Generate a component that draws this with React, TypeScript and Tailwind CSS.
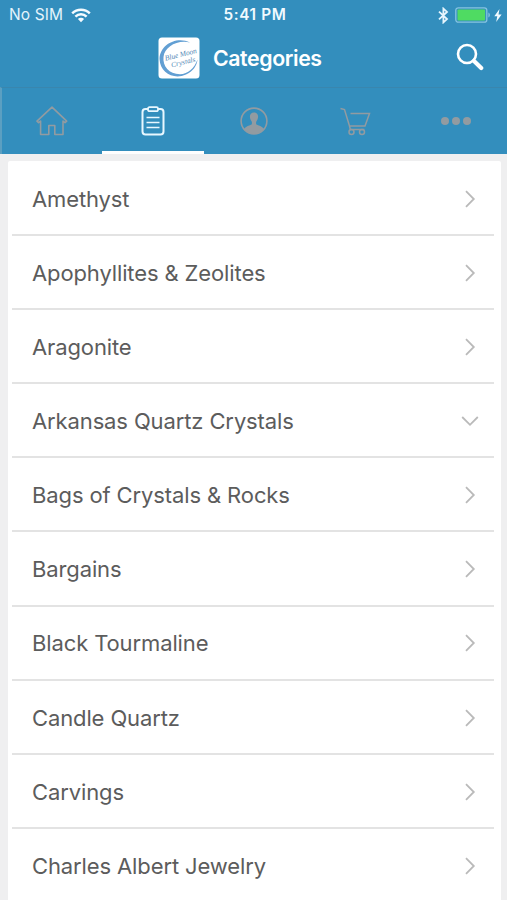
import type { ReactNode } from "react";

interface Category {
  name: string;
  open?: boolean;
}

const categories: Category[] = [
  { name: "Amethyst" },
  { name: "Apophyllites & Zeolites" },
  { name: "Aragonite" },
  { name: "Arkansas Quartz Crystals", open: true },
  { name: "Bags of Crystals & Rocks" },
  { name: "Bargains" },
  { name: "Black Tourmaline" },
  { name: "Candle Quartz" },
  { name: "Carvings" },
  { name: "Charles Albert Jewelry" },
];

export default function App() {
  return (
    <div className="flex h-[900px] w-[507px] flex-col overflow-hidden bg-[#efeff0] font-['Inter',sans-serif]">
      <header className="h-[154px] shrink-0 bg-[#338ebd] text-white">
        <StatusBar />
        <TitleBar />
        <TabBar />
      </header>

      {/* Category list */}
      <main className="mt-[7px] ml-2 w-[493px] flex-1 overflow-hidden rounded-t-[2px] bg-white pt-[0.8px] pr-[7px] pl-1">
        <ul>
          {categories.map((category) => (
            <li
              key={category.name}
              className="flex h-[74.13px] items-center justify-between border-b-2 border-[#e3e3e3] pt-[1.6px] pr-[15px] pl-5"
            >
              <span className="text-[22px] leading-7 tracking-[-0.12px] text-[#5c5c5c]">
                {category.name}
              </span>
              <Chevron open={category.open} />
            </li>
          ))}
        </ul>
      </main>
    </div>
  );
}

function StatusBar() {
  return (
    <div className="grid h-[30px] grid-cols-3 items-center pr-1.5 pl-[9px]">
      <div className="flex items-center gap-2">
        <span className="text-[15.5px] leading-5 tracking-[0.1px] text-[#e4f4fc]">No SIM</span>
        <svg width="20" height="15" viewBox="0 0 20 15" fill="none" stroke="#f4fbff" strokeWidth="2.5">
          <path d="M1.2 5.3a12.5 12.5 0 0 1 17.6 0" />
          <path d="M4.4 8.6a8 8 0 0 1 11.2 0" />
          <path d="M10 14.2 6.9 11.1a4.4 4.4 0 0 1 6.2 0z" fill="#f4fbff" stroke="none" />
        </svg>
      </div>
      <span className="text-center text-[15.3px] leading-5 font-semibold tracking-[0.65px] text-[#f0faff]">
        5:41 PM
      </span>
      <div className="-mr-px flex items-center justify-end">
        <svg width="11" height="17" viewBox="0 0 11 17" fill="none" stroke="#e6f5fd" strokeWidth="1.8">
          <path d="m1 4.7 8 7.4-3.6 3.3V1.6L9 4.9 1 12.3" />
        </svg>
        <svg className="mr-1 ml-1.5" width="35" height="16" viewBox="0 0 35 16">
          <rect x=".8" y=".8" width="31" height="14.4" rx="2.5" fill="none" stroke="#86c4df" strokeWidth="1.3" />
          <rect x="2.5" y="2.5" width="27.6" height="11" rx="1" fill="#4fdb62" />
          <path d="M33.4 5.6c2 .8 2 4 0 4.8z" fill="#86c4df" />
        </svg>
        <svg width="8" height="13" viewBox="0 0 8 13" fill="#f1faff">
          <path d="M5.5 0 .3 7.3h3L2.2 13l5.4-7.4H4.5z" />
        </svg>
      </div>
    </div>
  );
}

function TitleBar() {
  return (
    <div className="flex h-[57px] items-center pr-[23px] pb-[2px] pl-[158px]">
      <Logo />
      <h1 className="ml-[13px] text-[21.3px] leading-7 font-semibold tracking-[-0.4px]">Categories</h1>
      <button type="button" aria-label="Search" className="ml-auto pb-[2px]">
        <svg width="28" height="28" viewBox="0 0 28 28" fill="none" stroke="white">
          <circle cx="11" cy="11" r="9" strokeWidth="2.6" />
          <path d="m18 18 7.2 7" strokeWidth="4.2" strokeLinecap="round" />
        </svg>
      </button>
    </div>
  );
}

function Logo() {
  return (
    <svg className="overflow-visible" width="42" height="42" viewBox="0 0 42 42">
      <rect x=".5" y=".5" width="41" height="41" rx="3.5" fill="white" />
      <path
        d="M32 5.5C18-1 2 8 1.5 22 2 36 16 43 28 37.5c7-3 11-9 11.5-15C36.5 31 30 37.2 22 37.2 11 37.2 4.5 29 5.5 20 6.5 10 19 2.5 32 5.5z"
        fill="#629fd3"
      />
      <g
        fill="#5288b5"
        fontFamily="'Liberation Serif', serif"
        fontStyle="italic"
        fontSize="7.4"
        transform="rotate(-14 21 22)"
      >
        <text x="7.5" y="20.5">Blue Moon</text>
        <text x="12" y="28.5">Crystals</text>
      </g>
    </svg>
  );
}

function TabBar() {
  return (
    <nav className="grid h-[67px] grid-cols-5 border-t border-l-2 border-t-[#3986ae] border-l-[#5b9fc1] text-[#929ba1]">
      <Tab label="Home">
        <svg width="32" height="30" viewBox="0 0 32 30" fill="none" stroke="currentColor" strokeWidth="1.6" strokeLinejoin="round">
          <path d="M16 1.2 1 15.2l1.6 1.5 2-1.7v13.5h8.2v-9h6v9H27V15l2 1.7 1.7-1.5z" />
        </svg>
      </Tab>
      <Tab label="Categories" active>
        <svg width="24" height="30" viewBox="0 0 24 30" fill="none" stroke="currentColor" strokeWidth="2">
          <rect x="1.5" y="3" width="21" height="25.5" rx="3" />
          <rect x="7" y="1.2" width="10" height="4" rx="1.5" fill="#338ebd" strokeWidth="1.8" />
          <path d="M5.5 11.5h13M5.5 16.5h13M5.5 21.5h13" strokeWidth="1.5" />
        </svg>
      </Tab>
      <Tab label="Account">
        <svg width="28" height="28" viewBox="0 0 28 28">
          <circle cx="14" cy="14" r="12.9" fill="none" stroke="currentColor" strokeWidth="1.6" />
          <path
            d="M14 5.5c-2.8 0-4.3 1.9-4.1 4.6.2 2.3 1.1 3.6 2 4.8v2.4c-2.5 1.4-6 1.8-7.9 4.7a13 13 0 0 0 20 0c-1.9-2.9-5.4-3.3-7.9-4.7v-2.4c.9-1.2 1.8-2.5 2-4.8.2-2.7-1.3-4.6-4.1-4.6z"
            fill="currentColor"
          />
        </svg>
      </Tab>
      <Tab label="Cart">
        <svg width="31" height="29" viewBox="0 0 31 29" fill="none" stroke="currentColor" strokeWidth="1.5">
          <path d="M.5 1.5 4.5 2.5 9.5 19H25L29.5 6.5H10.5M9.5 19l.8 3.5h14" />
          <circle cx="11.5" cy="25" r="2.5" />
          <circle cx="22" cy="25" r="2.5" />
        </svg>
      </Tab>
      <Tab label="More">
        <svg width="30" height="8" viewBox="0 0 30 8" fill="currentColor">
          <circle cx="4" cy="4" r="4" />
          <circle cx="15" cy="4" r="4" />
          <circle cx="26" cy="4" r="4" />
        </svg>
      </Tab>
    </nav>
  );
}

function Tab({ label, active, children }: { label: string; active?: boolean; children: ReactNode }) {
  return (
    <button
      type="button"
      aria-label={label}
      className={`-ml-px flex items-center justify-center border-b-[3px] pt-[3px] ${
        active ? "border-white text-[#e8f7ff]" : "border-transparent"
      }`}
    >
      {children}
    </button>
  );
}

function Chevron({ open }: { open?: boolean }) {
  return (
    <svg
      className={open ? "rotate-90" : ""}
      width="18"
      height="18"
      viewBox="0 0 18 18"
      fill="none"
      stroke="#bababa"
      strokeWidth="1.8"
    >
      <path d="m5 1.2 7.8 7.8L5 16.8" />
    </svg>
  );
}
